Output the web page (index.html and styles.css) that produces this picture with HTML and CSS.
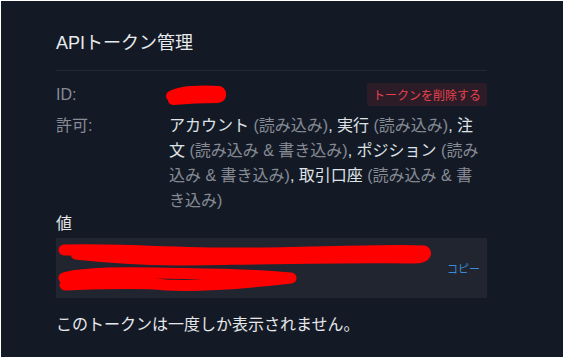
FILE: index.html
```html
<!DOCTYPE html>
<html>
<head>
    <link rel="stylesheet" href="styles.css">
</head>
<body>
    <div class="panel">
        <div class="card">
            <h2 class="title">APIトークン管理</h2>
            <div class="divider"></div>

            <div class="row row-id">
                <div class="label">ID:</div>
                <div class="value">
                    <svg class="redact-id" width="64" height="20" viewBox="0 0 64 20">
                        <path d="M7 11 C 15 6, 35 5, 55 6 C 58 8, 58 12, 54 13 C 38 13, 20 14, 9 15" fill="none" stroke="#ff0000" stroke-width="10" stroke-linecap="round" stroke-linejoin="round"/>
                    </svg>
                </div>
                <button class="delete-btn">トークンを削除する</button>
            </div>

            <div class="row row-perm">
                <div class="label">許可:</div>
                <div class="perm-text">
                    <span class="perm">アカウント</span> <span class="scope">(読み込み)</span>, <span class="perm">実行</span> <span class="scope">(読み込み)</span>, <span class="perm">注</span><span class="perm">文</span> <span class="scope">(読み込み &amp; 書き込み)</span>, <span class="perm">ポジション</span> <span class="scope">(読み</span><span class="scope">込み &amp; 書き込み)</span>, <span class="perm">取引口座</span> <span class="scope">(読み込み &amp; 書</span><span class="scope">き込み)</span>
                </div>
            </div>

            <div class="value-title">値</div>
            <div class="token-box">
                <svg class="redact-token" width="380" height="60" viewBox="0 0 380 60">
                    <path d="M8 12 C 60 10, 120 16, 200 15 C 280 14, 340 11, 368 13 C 372 16, 368 20, 358 20 C 300 19, 200 21, 120 22 C 60 21, 30 17, 20 16" fill="none" stroke="#ff0000" stroke-width="11" stroke-linecap="round" stroke-linejoin="round"/>
                    <path d="M8 40 C 20 36, 50 34, 100 35 C 150 36, 200 36, 235 40 C 200 44, 150 49, 110 47 C 80 44, 40 46, 9 47" fill="none" stroke="#ff0000" stroke-width="11" stroke-linecap="round" stroke-linejoin="round"/>
                </svg>
                <span class="copy">コピー</span>
            </div>

            <p class="note">このトークンは一度しか表示されません。</p>
        </div>
    </div>
</body>
</html>
```

FILE: styles.css
```css
html, body {
    margin: 0;
    padding: 0;
    height: 100%;
}
body {
    font-family: "Liberation Sans", "Noto Sans CJK JP", sans-serif;
    background-color: #141a25;
    color: #e4e6ea;
}
.panel {
    box-sizing: border-box;
    height: 100%;
    border-top: 1px solid #ffffff;
    border-left: 1px solid #ffffff;
    border-right: 2px solid #ffffff;
    padding: 30px 0 0 55px;
}
.card {
    width: 431px;
}
.title {
    margin: 0;
    font-size: 18px;
    font-weight: normal;
    line-height: 24px;
    color: #e8eaee;
}
.divider {
    height: 1px;
    background-color: #232936;
    margin-top: 15px;
}
.row {
    display: grid;
    grid-template-columns: 113px 1fr auto;
    font-size: 16px;
}
.row-id {
    margin-top: 12px;
    align-items: center;
    height: 23px;
}
.label {
    color: #878c96;
}
.value {
    display: flex;
    align-items: center;
}
.redact-id {
    margin-left: -5px;
}
.delete-btn {
    font-family: inherit;
    font-size: 12px;
    color: #e8424f;
    background-color: #2b1c27;
    border: none;
    height: 23px;
    width: 120px;
    padding: 0;
    border-radius: 2px;
}
.row-perm {
    grid-template-columns: 113px 1fr;
    margin-top: 7px;
    line-height: 25px;
}
.perm-text {
    color: #dfe2e7;
    padding-right: 6px;
}
.scope {
    color: #868b95;
}
.value-title {
    font-size: 16px;
    line-height: 20px;
    margin-top: 1px;
}
.token-box {
    margin-top: 4px;
    height: 60px;
    background-color: #20252f;
    display: flex;
    align-items: center;
    justify-content: space-between;
    padding-right: 7px;
}
.copy {
    font-size: 11px;
    color: #3b8bd9;
}
.note {
    margin: 17px 0 0;
    font-size: 16px;
    line-height: 20px;
    color: #e6e8ec;
}
```
